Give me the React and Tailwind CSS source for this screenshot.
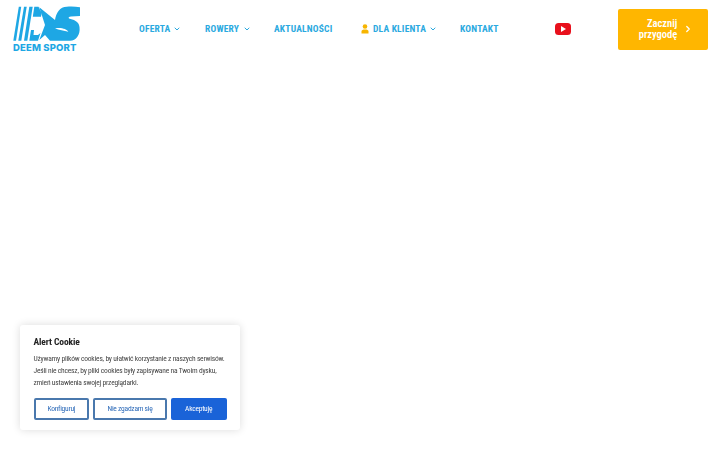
import React from "react";
import { ChevronDown, ChevronRight } from "lucide-react";

const NAV_BLUE = "text-[#2aa9e0]";

// Deem Sport mark: slanted stripes, cut D and heavy S
function Logo() {
  return (
    <div className="flex w-[68px] flex-col items-start">
      <svg width="68" height="37" viewBox="0 0 68 37" fill="#1ea7e4">
        <path d="M0.300 35.700 L5.800 1.700 H8.200 L3 35.700 Z" />
        <path d="M5.300 35.700 L11 1.700 H13.700 L8.300 35.700 Z" />
        <path d="M11 35.700 L16.300 1.700 H19.700 L14.300 35.700 Z" />
        <path d="M21.300 1.700 H25.500 L28.700 8 L28 11.700 H19.800 Z" />
        <path d="M18 25 H21 L20.500 30 H25 L27.500 28 L25 35.700 H16.300 Z" />
        <path d="M26.300 2.300 L42 15 C43 8 47 1.700 53.700 1.700 C58 1.400 63 1.500 67 2.300 L67 11 L58 11.500 C56 11.800 55 12.500 56 13.500 C60 14.500 66 16 66.500 22 C67.500 30 63 35.700 57 35.700 H37 L32 30 L26.300 35 L32 20 Z" />
        <path d="M42 23.300 C46 25 51 26 55.300 26.700 C54 24 48 22 42 23.300 Z" fill="#ffffff" />
      </svg>
      <span className="mt-[1px] font-['Inter',sans-serif] text-[9.500px] leading-[10px] font-extrabold tracking-[0.15px] whitespace-nowrap text-[#1ea7e4]">
        DEEM SPORT
      </span>
    </div>
  );
}

function NavItem({ label, width, chevron, icon }) {
  return (
    <a className={`flex items-center ${NAV_BLUE}`}>
      {icon}
      <span className={`${width} text-[9.500px] leading-none font-bold tracking-[0.2px] whitespace-nowrap font-stretch-semi-condensed`}>{label}</span>
      {chevron && <ChevronDown size={8} strokeWidth={3} className="ml-[3px]" />}
    </a>
  );
}

function UserIcon() {
  return (
    <svg width="8" height="10" viewBox="0 0 8 10" fill="#f7b500" className="mr-[4px]">
      <circle cx="4" cy="2.500" r="2.300" />
      <path d="M0.500 9.500 V7.500 C0.500 6 2 5.500 4 5.500 C6 5.500 7.500 6 7.500 7.500 V9.500 Z" />
    </svg>
  );
}

function Header() {
  return (
    <header className="flex h-[58px] items-center pr-[12px] pl-[13px] font-['Roboto',sans-serif]">
      <Logo />
      <nav className="ml-[58px] flex items-center">
        <NavItem label="OFERTA" width="w-[31px]" chevron />
        <div className="ml-[24px]">
          <NavItem label="ROWERY" width="w-[35px]" chevron />
        </div>
        <div className="ml-[23px]">
          <NavItem label="AKTUALNOŚCI" width="w-[57px]" />
        </div>
        <div className="ml-[30px]">
          <NavItem label="DLA KLIENTA" width="w-[53px]" icon={<UserIcon />} chevron />
        </div>
        <div className="ml-[23px]">
          <NavItem label="KONTAKT" width="w-[37px]" />
        </div>
      </nav>
      <svg width="16" height="12" viewBox="0 0 16 12" className="ml-[58px]">
        <rect x="0" y="0" width="16" height="12" rx="3.500" fill="#e8101c" />
        <path d="M6 3 L11 6 L6 9 Z" fill="#ffffff" />
      </svg>
      <a className="ml-auto flex h-[41px] w-[90px] items-center justify-center gap-[6px] rounded-[2px] bg-[#ffb600] pl-[6px] text-white">
        <span className="text-right text-[10.500px] leading-[11px] font-semibold font-stretch-semi-condensed">
          Zacznij
          <br />
          przygodę
        </span>
        <ChevronRight size={10} strokeWidth={3} />
      </a>
    </header>
  );
}

function CookieBox() {
  return (
    <div className="fixed top-[325px] left-[20px] h-[105px] w-[220px] rounded-[3px] bg-white px-[13.500px] pt-[10px] font-['Roboto',sans-serif] font-stretch-condensed shadow-[0_0_8px_rgba(0,0,0,0.14)]">
      <h2 className="text-[9.500px] leading-[13px] font-bold tracking-[-0.1px] text-[#222222]">Alert Cookie</h2>
      <p className="mt-[5px] text-[7.500px] leading-[12px] tracking-[-0.2px] whitespace-nowrap text-[#444444]">
        Używamy plików cookies, by ułatwić korzystanie z naszych serwisów.
        <br />
        Jeśli nie chcesz, by pliki cookies były zapisywane na Twoim dysku,
        <br />
        zmień ustawienia swojej przeglądarki.
      </p>
      <div className="mt-[9px] flex gap-[4px] text-[7.500px] tracking-[-0.25px]">
        <button className="h-[22px] w-[56px] rounded-[2px] border-2 border-[#4a78ad] text-[#2b69b8]">Konfiguruj</button>
        <button className="h-[22px] w-[74px] rounded-[2px] border-2 border-[#4a78ad] text-[#2b69b8]">Nie zgadzam się</button>
        <button className="h-[22px] w-[56px] rounded-[2px] bg-[#1a63d8] text-white">Akceptuję</button>
      </div>
    </div>
  );
}

export default function App() {
  return (
    <div className="min-h-[450px] bg-white">
      <Header />
      <CookieBox />
    </div>
  );
}
